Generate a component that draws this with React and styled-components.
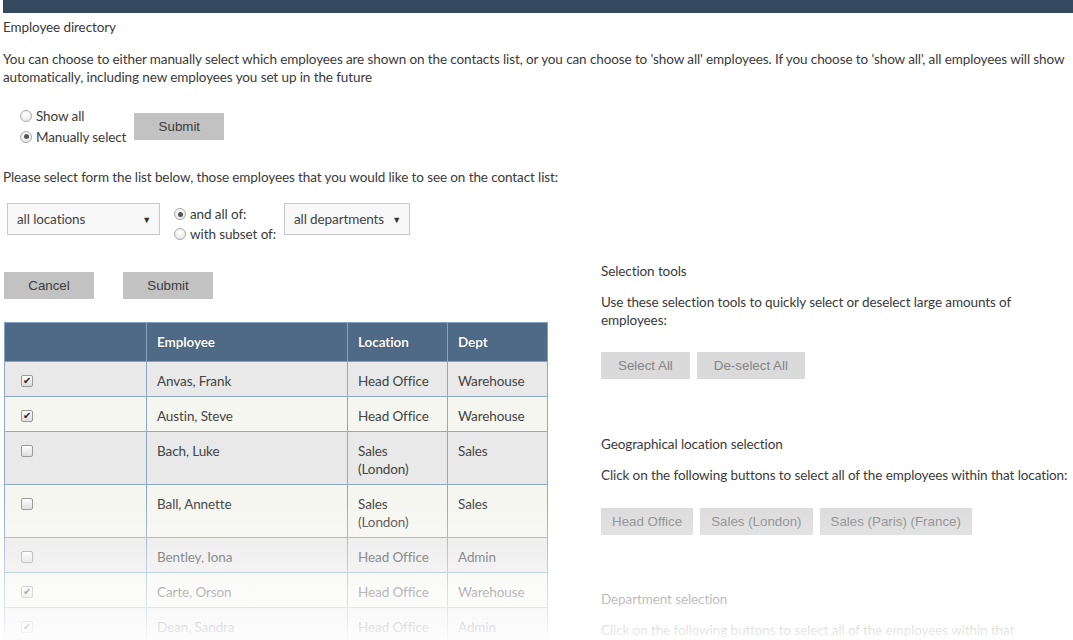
import React from "react";
import styled, { createGlobalStyle } from "styled-components";

const Global = createGlobalStyle`
  html, body { margin: 0; padding: 0; background: #fff; }
  body {
    font-family: "Lato", "Noto Sans", sans-serif;
    font-size: 13.5px;
    letter-spacing: -0.1px;
    color: #3a3a3a;
  }
  * { box-sizing: border-box; }
`;

const Page = styled.div`
  position: relative;
  height: 640px;
  overflow: hidden;
  padding-left: 3px;
`;

const TopBar = styled.div`
  height: 13px;
  background: #34495e;
`;

const Title = styled.div`
  margin-top: 5px;
  line-height: 18px;
`;

const Para = styled.p`
  margin: ${(p) => p.$mt || 0}px 0 0;
  line-height: 18px;
`;

const ModeForm = styled.div`
  display: flex;
  align-items: center;
  gap: 8px;
  margin-top: 19px;
  padding-left: 17px;
`;

const RadioStack = styled.div`
  display: flex;
  flex-direction: column;
`;

const RadioLine = styled.label`
  display: flex;
  align-items: center;
  gap: 4px;
  height: ${(p) => p.$h || 21}px;
  line-height: 18px;
`;

const Radio = styled.span`
  display: inline-block;
  flex: none;
  width: 12px;
  height: 12px;
  border-radius: 50%;
  border: 1px solid #a9a9a9;
  background: radial-gradient(circle at 50% 35%, #ffffff 0%, #e4e4e4 100%);
  position: relative;
  &::after {
    content: "";
    display: ${(p) => (p.$on ? "block" : "none")};
    position: absolute;
    left: 2.5px;
    top: 2.5px;
    width: 5px;
    height: 5px;
    border-radius: 50%;
    background: #555;
  }
`;

const GrayButton = styled.button`
  font-family: "Liberation Sans", Arial, sans-serif;
  font-size: 13.33px;
  letter-spacing: 0;
  height: 27px;
  border: none;
  padding: 0 ${(p) => (p.$w ? 0 : p.$pad || 17)}px;
  width: ${(p) => (p.$w ? p.$w + "px" : "auto")};
  background: ${(p) => (p.$light ? "#dadada" : "#c2c2c2")};
  color: ${(p) => (p.$light ? "#858585" : "#3c3c3c")};
  cursor: pointer;
`;

const FilterRow = styled.div`
  display: flex;
  align-items: flex-start;
  margin-top: 17px;
  padding-left: 4px;
`;

const FakeSelect = styled.div`
  display: flex;
  align-items: center;
  justify-content: space-between;
  width: ${(p) => p.$w}px;
  height: 32px;
  padding: 0 8px 0 9px;
  border: 1px solid #c8c8c8;
  background: #f8f8f8;
  color: #444;
`;

const Caret = styled.span`
  font-size: 9px;
  color: #333;
`;

const FilterRadios = styled(RadioStack)`
  margin: 1px 8px 0 14px;
`;

const Columns = styled.div`
  display: flex;
  margin-top: 18px;
  align-items: flex-start;
`;

const LeftCol = styled.div`
  width: 545px;
  padding-top: 10px;
  padding-left: 1px;
`;

const ButtonRow = styled.div`
  display: flex;
  gap: ${(p) => p.$gap || 7}px;
  margin-top: ${(p) => p.$mt || 0}px;
`;

const Table = styled.table`
  margin-top: 23px;
  border-collapse: collapse;
  width: 544px;
  table-layout: fixed;
`;

const Th = styled.th`
  background: #4f6a86;
  color: #fff;
  text-align: left;
  font-weight: 700;
  padding: 10px 10px;
  line-height: 18px;
  border: 1px solid #84a2bf;
  text-shadow: 0 0 1px rgba(0, 0, 0, 0.5);
`;

const Tr = styled.tr`
  background: ${(p) => (p.$alt ? "#f5f6f0" : "#e9e9e9")};
`;

const Td = styled.td`
  padding: 10px 10px 6px ${(p) => (p.$box ? 16 : 10)}px;
  line-height: 18px;
  vertical-align: top;
  border: 1px solid #8eaac4;
  color: #444;
`;

const Check = styled.span`
  display: inline-block;
  width: 12px;
  height: 12px;
  margin-top: 3px;
  border: 1px solid #9a9a9a;
  border-radius: 2px;
  background: linear-gradient(#fdfdfd, #dedede);
  position: relative;
  vertical-align: top;
  &::after {
    content: "${(p) => (p.$on ? "✔" : "")}";
    position: absolute;
    left: 1px;
    top: -2px;
    font-size: 10px;
    line-height: 14px;
    color: #222;
    font-family: "DejaVu Sans", sans-serif;
  }
`;

const RightCol = styled.div`
  margin-left: 53px;
  width: 470px;
`;

const Heading = styled.div`
  line-height: 18px;
  margin-top: ${(p) => p.$mt || 0}px;
`;

const Fade = styled.div`
  position: absolute;
  left: 0;
  right: 0;
  bottom: 0;
  height: 140px;
  pointer-events: none;
  background: linear-gradient(rgba(255, 255, 255, 0), rgba(255, 255, 255, 0.92));
`;

const rows = [
  ["Anvas, Frank", "Head Office", "Warehouse", true],
  ["Austin, Steve", "Head Office", "Warehouse", true],
  ["Bach, Luke", "Sales (London)", "Sales", false],
  ["Ball, Annette", "Sales (London)", "Sales", false],
  ["Bentley, Iona", "Head Office", "Admin", false],
  ["Carte, Orson", "Head Office", "Warehouse", true],
  ["Dean, Sandra", "Head Office", "Admin", true],
  ["Eden, Paul", "Head Office", "Warehouse", true],
];

export default function App() {
  return (
    <Page>
      <Global />
      <TopBar />
      <Title>Employee directory</Title>
      <Para $mt={14}>
        You can choose to either manually select which employees are shown on the contacts list, or you can
        choose to 'show all' employees. If you choose to 'show all', all employees will show automatically,
        including new employees you set up in the future
      </Para>

      <ModeForm>
        <RadioStack>
          <RadioLine>
            <Radio />
            Show all
          </RadioLine>
          <RadioLine>
            <Radio $on />
            Manually select
          </RadioLine>
        </RadioStack>
        <GrayButton $w={90}>Submit</GrayButton>
      </ModeForm>

      <Para $mt={21}>
        Please select form the list below, those employees that you would like to see on the contact list:
      </Para>

      <FilterRow>
        <FakeSelect $w={153}>
          all locations <Caret>▼</Caret>
        </FakeSelect>
        <FilterRadios>
          <RadioLine $h={20}>
            <Radio $on />
            and all of:
          </RadioLine>
          <RadioLine $h={20}>
            <Radio />
            with subset of:
          </RadioLine>
        </FilterRadios>
        <FakeSelect $w={126}>
          all departments <Caret>▼</Caret>
        </FakeSelect>
      </FilterRow>

      <Columns>
        <LeftCol>
          <ButtonRow $gap={29}>
            <GrayButton $w={90}>Cancel</GrayButton>
            <GrayButton $w={90}>Submit</GrayButton>
          </ButtonRow>
          <Table>
            <colgroup>
              <col style={{ width: 142 }} />
              <col style={{ width: 201 }} />
              <col style={{ width: 100 }} />
              <col style={{ width: 100 }} />
            </colgroup>
            <thead>
              <tr>
                <Th />
                <Th>Employee</Th>
                <Th>Location</Th>
                <Th>Dept</Th>
              </tr>
            </thead>
            <tbody>
              {rows.map(([name, loc, dept, on], i) => (
                <Tr key={name} $alt={i % 2 === 1}>
                  <Td $box>
                    <Check $on={on} />
                  </Td>
                  <Td>{name}</Td>
                  <Td>{loc}</Td>
                  <Td>{dept}</Td>
                </Tr>
              ))}
            </tbody>
          </Table>
        </LeftCol>

        <RightCol>
          <Heading>Selection tools</Heading>
          <Para $mt={13}>
            Use these selection tools to quickly select or deselect large amounts of employees:
          </Para>
          <ButtonRow $mt={23}>
            <GrayButton $light>Select All</GrayButton>
            <GrayButton $light>De-select All</GrayButton>
          </ButtonRow>

          <Heading $mt={56}>Geographical location selection</Heading>
          <Para $mt={13}>
            Click on the following buttons to select all of the employees within that location:
          </Para>
          <ButtonRow $mt={24}>
            <GrayButton $light $pad={11}>Head Office</GrayButton>
            <GrayButton $light $pad={11}>Sales (London)</GrayButton>
            <GrayButton $light $pad={11}>Sales (Paris) (France)</GrayButton>
          </ButtonRow>

          <Heading $mt={55}>Department selection</Heading>
          <Para $mt={13}>
            Click on the following buttons to select all of the employees within that department:
          </Para>
          <ButtonRow $mt={24}>
            <GrayButton $light $pad={11}>Admin</GrayButton>
            <GrayButton $light $pad={11}>Sales</GrayButton>
            <GrayButton $light $pad={11}>Warehouse</GrayButton>
          </ButtonRow>
        </RightCol>
      </Columns>
      <Fade />
    </Page>
  );
}
